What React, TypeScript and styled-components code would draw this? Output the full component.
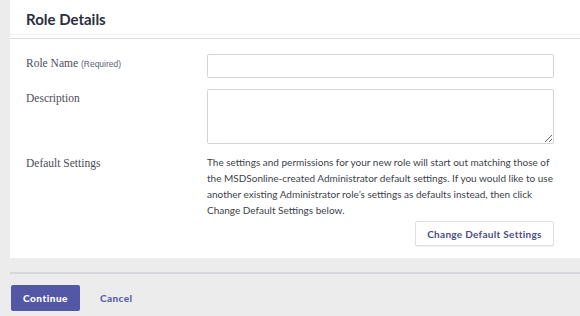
import React from 'react';
import styled, { createGlobalStyle } from 'styled-components';

const GlobalStyle = createGlobalStyle`
  html, body {
    margin: 0;
    padding: 0;
    background: #ececec;
    font-family: Lato, "Liberation Sans", sans-serif;
  }
`;

const Page = styled.div`
  width: 580px;
  height: 316px;
  overflow: hidden;
  display: flex;
  background: #ececec;
`;

const Main = styled.div`
  flex: 1;
  padding: 0 3px 0 10px;
  display: flex;
  flex-direction: column;
`;

const Scrollbar = styled.div`
  width: 7px;
  background: #f1f1f1;
`;

const Card = styled.div`
  background: #fff;
  display: flex;
  flex-direction: column;
`;

const CardHeader = styled.div`
  height: 34px;
  padding: 0 16px;
  display: flex;
  align-items: center;
  border-bottom: 1px solid #f0f0f3;
  margin-bottom: 3px;

  h2 {
    margin: 3px 0 0;
    font-size: 15px;
    font-weight: 700;
    color: #2b2e3d;
  }
`;

const CardBody = styled.div`
  border-top: 1px solid #dcdce3;
  padding: 15px 16px 12px;
  display: flex;
  flex-direction: column;
`;

const Row = styled.div<{ $gap?: number }>`
  display: grid;
  grid-template-columns: 181px 1fr;
  margin-bottom: ${(p) => p.$gap ?? 0}px;
`;

const Label = styled.div`
  font-family: "Liberation Serif", "DejaVu Serif", serif;
  font-size: 11.5px;
  color: #4b4d5a;
  padding-top: 3px;

  small {
    font-family: "Liberation Sans", sans-serif;
    font-size: 8.5px;
    color: #5e6070;
  }
`;

const Input = styled.input`
  box-sizing: border-box;
  width: 347px;
  height: 24px;
  border: 1px solid #d3d3db;
  border-radius: 2px;
  background: #fff;
`;

const TextArea = styled.textarea`
  box-sizing: border-box;
  width: 347px;
  height: 55px;
  border: 1px solid #d3d3db;
  border-radius: 2px;
  background: #fff;
  display: block;
`;

const Help = styled.p`
  margin: 0;
  font-family: Lato, sans-serif;
  font-size: 10px;
  line-height: 16px;
  color: #3d3f4b;
  width: 360px;
  white-space: nowrap;
`;

const Actions = styled.div`
  display: flex;
  justify-content: flex-end;
  width: 347px;
  margin-top: 3px;
`;

const SecondaryButton = styled.button`
  box-sizing: border-box;
  height: 25px;
  width: 139px;
  background: #fff;
  border: 1px solid #dfdfe5;
  border-radius: 2px;
  box-shadow: 0 1px 1px rgba(0, 0, 0, 0.06);
  font-family: Lato, sans-serif;
  font-weight: 700;
  font-size: 10px;
  letter-spacing: 0.3px;
  color: #4a4e8c;
`;

const Divider = styled.hr`
  margin: 14px 0 11px;
  border: none;
  border-top: 2px solid #d7d7de;
`;

const Footer = styled.div`
  display: flex;
  align-items: center;
  gap: 20px;
`;

const PrimaryButton = styled.button`
  box-sizing: border-box;
  height: 26px;
  width: 69px;
  margin-left: 1px;
  background: #5457a6;
  border: none;
  border-radius: 2px;
  color: #fff;
  font-family: Lato, sans-serif;
  font-weight: 900;
  font-size: 10px;
  letter-spacing: 0.5px;
`;

const LinkButton = styled.button`
  background: none;
  border: none;
  padding: 0;
  font-family: Lato, sans-serif;
  font-weight: 900;
  font-size: 10px;
  letter-spacing: 0.4px;
  color: #5a5ea8;
`;

export default function App() {
  return (
    <Page>
      <GlobalStyle />
      <Main>
        <Card>
          <CardHeader>
            <h2>Role Details</h2>
          </CardHeader>
          <CardBody>
            <Row $gap={11}>
              <Label>
                Role Name <small>(Required)</small>
              </Label>
              <Input />
            </Row>
            <Row $gap={10}>
              <Label>Description</Label>
              <TextArea />
            </Row>
            <Row>
              <Label>Default Settings</Label>
              <div>
                <Help>
                  The settings and permissions for your new role will start out matching those of
                  <br />
                  the MSDSonline-created Administrator default settings. If you would like to use
                  <br />
                  another existing Administrator role’s settings as defaults instead, then click
                  <br />
                  Change Default Settings below.
                </Help>
                <Actions>
                  <SecondaryButton>Change Default Settings</SecondaryButton>
                </Actions>
              </div>
            </Row>
          </CardBody>
        </Card>
        <Divider />
        <Footer>
          <PrimaryButton>Continue</PrimaryButton>
          <LinkButton>Cancel</LinkButton>
        </Footer>
      </Main>
      <Scrollbar />
    </Page>
  );
}
